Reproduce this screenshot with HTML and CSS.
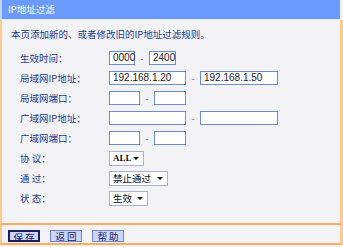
FILE: index.html
```html
<!DOCTYPE html>
<html>
<head>
<meta charset="utf-8">
<link rel="stylesheet" href="styles.css">
</head>
<body>
<div class="page">
  <div class="title">IP地址过滤</div>

  <div class="panel">
    <p class="intro">本页添加新的、或者修改旧的IP地址过滤规则。</p>

    <div class="form">
      <div class="row">
        <span class="label">生效时间：</span>
        <span class="box w26">0000</span><span class="dash">-</span><span class="box w27">2400</span>
      </div>
      <div class="row">
        <span class="label">局域网IP地址：</span>
        <span class="box w77">192.168.1.20</span><span class="dash">-</span><span class="box w78">192.168.1.50</span>
      </div>
      <div class="row">
        <span class="label">局域网端口：</span>
        <span class="box w31"></span><span class="dash">-</span><span class="box w32"></span>
      </div>
      <div class="row">
        <span class="label">广域网IP地址：</span>
        <span class="box w77"></span><span class="dash">-</span><span class="box w78"></span>
      </div>
      <div class="row">
        <span class="label">广域网端口：</span>
        <span class="box w31"></span><span class="dash">-</span><span class="box w32"></span>
      </div>
      <div class="row">
        <span class="label">协&nbsp;议：</span>
        <span class="sel w35"><span class="val mono">ALL</span><span class="arrow"></span></span>
      </div>
      <div class="row">
        <span class="label">通&nbsp;过：</span>
        <span class="sel w59"><span class="val">禁止通过</span><span class="arrow"></span></span>
      </div>
      <div class="row">
        <span class="label">状&nbsp;态：</span>
        <span class="sel w39"><span class="val">生效</span><span class="arrow"></span></span>
      </div>
    </div>
  </div>

  <div class="footer">
    <button class="btn focus">保 存</button>
    <button class="btn">返 回</button>
    <button class="btn">帮 助</button>
  </div>
</div>
</body>
</html>
```

FILE: styles.css
```css
body {
    margin: 0;
    background-color: #f3f3f6;
    font-family: "Noto Sans CJK SC", "Liberation Sans", sans-serif;
    font-size: 9.5px;
}

.page {
    width: 343px;
    height: 247px;
}

.title {
    height: 19px;
    line-height: 19px;
    margin-right: 3px;
    padding-left: 6px;
    border-left: 2px solid #c4d4ff;
    border-bottom: 1px solid #e4eaff;
    background-color: #6b9bff;
    color: #fff;
}

.panel {
    height: 203px;
    border-left: 2px solid #ffc990;
    border-right: 3px solid #ffc990;
    border-bottom: 2px solid #ffac5c;
}

.intro {
    margin: 0;
    padding: 7px 0 0 9px;
    height: 14px;
    line-height: 14px;
    color: #1d3b8f;
}

.form {
    margin-top: 7px;
    padding-left: 18px;
}

.row {
    display: flex;
    align-items: center;
    height: 20px;
}

.label {
    width: 89px;
    color: #1d3b8f;
}

.box {
    box-sizing: border-box;
    height: 14px;
    line-height: 12px;
    padding-left: 3px;
    border: 1px solid #6d8bdc;
    background-color: #fff;
    font-family: "Liberation Sans", sans-serif;
    font-size: 10px;
    color: #222;
}

.dash {
    width: 14px;
    text-align: center;
    color: #5a6fae;
    font-family: "Liberation Sans", sans-serif;
}

.w26 { width: 26px; }
.w27 { width: 27px; }
.w31 { width: 31px; }
.w32 { width: 32px; }
.w35 { width: 35px; }
.w39 { width: 39px; }
.w59 { width: 59px; }
.w77 { width: 77px; }
.w78 { width: 78px; }

.sel {
    box-sizing: border-box;
    display: flex;
    align-items: center;
    justify-content: space-between;
    height: 15px;
    padding: 0 4px 0 3px;
    border: 1px solid #a9b3c9;
    background-color: #fff;
    color: #111;
}

.mono {
    font-family: "Liberation Serif", serif;
    font-weight: bold;
    font-size: 9px;
}

.arrow {
    width: 0;
    height: 0;
    border-left: 3px solid transparent;
    border-right: 3px solid transparent;
    border-top: 3px solid #111;
}

.footer {
    height: 18px;
    padding-left: 6px;
    display: flex;
    align-items: center;
    gap: 10px;
    border-left: 2px solid #ffc990;
    border-right: 3px solid #ffc990;
    border-bottom: 2px solid #ffac5c;
}

.btn {
    box-sizing: border-box;
    width: 32px;
    height: 12px;
    margin-top: 4px;
    padding: 0;
    border: 1px solid #6f86d8;
    background-color: #cdd6f7;
    color: #14236e;
    font-family: "Noto Sans CJK SC", sans-serif;
    font-size: 9.5px;
    line-height: 10px;
}

.focus {
    border: 2px solid #1a1f5c;
}
```
